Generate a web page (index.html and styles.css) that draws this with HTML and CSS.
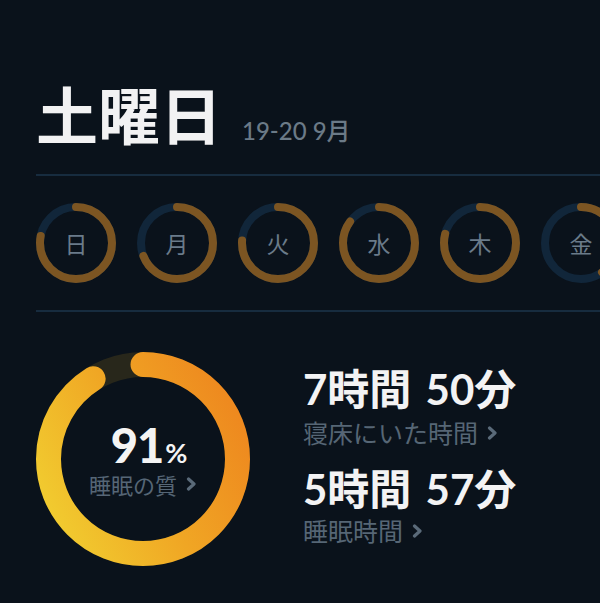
FILE: index.html
```html
<!DOCTYPE html>
<html lang="ja">
<head>
<meta charset="utf-8">
<title>土曜日</title>
<link rel="stylesheet" href="styles.css">
</head>
<body>
<div class="screen">
  <header class="head">
    <h1 class="title">土曜日</h1>
    <span class="date">19-20 9月</span>
  </header>
  <div class="rule"></div>
  <div class="week">
    <div class="day">
      <svg class="day-ring" viewBox="0 0 80 80"><circle class="day-track" cx="40" cy="40" r="36"/><circle class="day-prog" cx="40" cy="40" r="36" stroke-dasharray="176.4 300"/></svg>
      <span class="day-label">日</span>
    </div>
    <div class="day">
      <svg class="day-ring" viewBox="0 0 80 80"><circle class="day-track" cx="40" cy="40" r="36"/><circle class="day-prog" cx="40" cy="40" r="36" stroke-dasharray="156.1 300"/></svg>
      <span class="day-label">月</span>
    </div>
    <div class="day">
      <svg class="day-ring" viewBox="0 0 80 80"><circle class="day-track" cx="40" cy="40" r="36"/><circle class="day-prog" cx="40" cy="40" r="36" stroke-dasharray="171.9 300"/></svg>
      <span class="day-label">火</span>
    </div>
    <div class="day">
      <svg class="day-ring" viewBox="0 0 80 80"><circle class="day-track" cx="40" cy="40" r="36"/><circle class="day-prog" cx="40" cy="40" r="36" stroke-dasharray="192.3 300"/></svg>
      <span class="day-label">水</span>
    </div>
    <div class="day">
      <svg class="day-ring" viewBox="0 0 80 80"><circle class="day-track" cx="40" cy="40" r="36"/><circle class="day-prog" cx="40" cy="40" r="36" stroke-dasharray="178.7 300"/></svg>
      <span class="day-label">木</span>
    </div>
    <div class="day">
      <svg class="day-ring" viewBox="0 0 80 80"><circle class="day-track" cx="40" cy="40" r="36"/><circle class="day-prog" cx="40" cy="40" r="36" stroke-dasharray="90.5 300"/></svg>
      <span class="day-label">金</span>
    </div>
  </div>
  <div class="rule"></div>
  <section class="summary">
    <div class="score">
      <svg class="score-ring" viewBox="0 0 214 214">
        <defs>
          <linearGradient id="scoreGrad" x1="0.75" y1="1" x2="0.25" y2="0">
            <stop offset="0" stop-color="#ee891f"/>
            <stop offset="0.5" stop-color="#f0a624"/>
            <stop offset="1" stop-color="#f1ca2f"/>
          </linearGradient>
        </defs>
        <circle class="score-track" cx="107" cy="107" r="94.5"/>
        <circle class="score-prog" cx="107" cy="107" r="94.5" stroke-dasharray="540.3 700"/>
      </svg>
      <div class="score-text">
        <div class="score-value"><span class="score-num">91</span><span class="score-pct">%</span></div>
        <div class="score-label">睡眠の質<svg class="chev" viewBox="0 0 10 14"><polyline points="2,2 7.5,7 2,12"/></svg></div>
      </div>
    </div>
    <div class="stats">
      <div class="stat-value first">7時間 50分</div>
      <div class="stat-label">寝床にいた時間<svg class="chev" viewBox="0 0 10 14"><polyline points="2,2 7.5,7 2,12"/></svg></div>
      <div class="stat-value second">5時間 57分</div>
      <div class="stat-label">睡眠時間<svg class="chev" viewBox="0 0 10 14"><polyline points="2,2 7.5,7 2,12"/></svg></div>
    </div>
  </section>
</div>
</body>
</html>
```

FILE: styles.css
```css
html, body {
  margin: 0;
  padding: 0;
  background: #0a121b;
}
body {
  width: 600px;
  height: 603px;
  overflow: hidden;
  font-family: "Noto Sans CJK JP", "Noto Sans", sans-serif;
}
.screen {
  padding-left: 36px;
  overflow: hidden;
}
.head {
  display: flex;
  align-items: baseline;
  gap: 20px;
  margin-top: 82px;
  height: 62px;
}
.title {
  margin: 0;
  font-size: 62px;
  line-height: 1;
  font-weight: 700;
  color: #f2f2f3;
}
.date {
  font-family: "Lato", "Noto Sans CJK JP", sans-serif;
  font-size: 24px;
  font-weight: 500;
  color: #6b7a87;
  line-height: 1;
}
.rule {
  height: 2px;
  background: #172c3f;
}
.head + .rule {
  margin-top: 30px;
}
.week {
  display: flex;
  gap: 21px;
  margin: 27px 0;
  height: 80px;
  white-space: nowrap;
}
.day {
  flex: 0 0 80px;
  height: 80px;
  display: grid;
  place-items: center;
}
.day-ring {
  grid-area: 1 / 1;
  width: 80px;
  height: 80px;
  transform: rotate(-90deg);
}
.day-track {
  fill: none;
  stroke: #11263a;
  stroke-width: 8;
}
.day-prog {
  fill: none;
  stroke: #7c5522;
  stroke-width: 8;
  stroke-linecap: round;
}
.day-label {
  grid-area: 1 / 1;
  font-size: 23px;
  font-weight: 400;
  color: #6a7b8a;
  line-height: 1;
}
.summary {
  display: flex;
  margin-top: 40px;
}
.score {
  display: grid;
  place-items: center;
  width: 214px;
  height: 214px;
}
.score-ring {
  grid-area: 1 / 1;
  width: 214px;
  height: 214px;
  transform: rotate(-90deg);
}
.score-track {
  fill: none;
  stroke: #28271b;
  stroke-width: 25;
}
.score-prog {
  fill: none;
  stroke: url(#scoreGrad);
  stroke-width: 25;
  stroke-linecap: round;
}
.score-text {
  grid-area: 1 / 1;
  display: flex;
  flex-direction: column;
  align-items: center;
  margin-top: -2px;
}
.score-value {
  display: flex;
  align-items: baseline;
  margin-left: 12px;
  color: #f4f4f4;
  font-family: "Lato", sans-serif;
  font-weight: 900;
  line-height: 1;
}
.score-num {
  font-size: 47px;
  letter-spacing: -1px;
}
.score-pct {
  font-size: 27px;
  font-weight: 700;
  margin-left: 2px;
}
.score-label {
  display: flex;
  align-items: center;
  margin-top: 4px;
  font-size: 22px;
  line-height: 1;
  color: #566676;
}
.chev {
  width: 11px;
  height: 14px;
  margin-left: 9px;
}
.chev polyline {
  fill: none;
  stroke: #5a6a79;
  stroke-width: 3.2;
  stroke-linecap: round;
  stroke-linejoin: round;
}
.stats {
  display: flex;
  flex-direction: column;
  margin-left: 53px;
  padding-top: 16px;
}
.stat-value {
  font-family: "Lato", "Noto Sans CJK JP", sans-serif;
  font-size: 42px;
  font-weight: 700;
  line-height: 1;
  word-spacing: 4px;
  color: #f3f3f4;
  white-space: nowrap;
}
.stat-value.second {
  margin-top: 23px;
}
.stat-label {
  display: flex;
  align-items: center;
  margin-top: 10px;
  font-size: 25px;
  line-height: 1;
  color: #566675;
}
.stat-value.second + .stat-label {
  margin-top: 8px;
}
```
